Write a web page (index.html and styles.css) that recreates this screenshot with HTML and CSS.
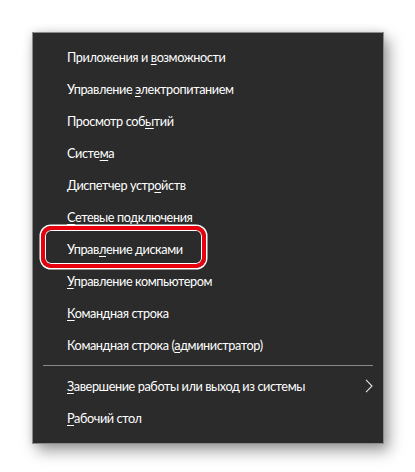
FILE: index.html
```html
<!DOCTYPE html>
<html lang="ru">
<head>
<meta charset="utf-8">
<link rel="stylesheet" href="styles.css">
</head>
<body>
<div class="menu">
  <div class="item"><span class="label">Приложения и <u>в</u>озможности</span></div>
  <div class="item"><span class="label">Управление <u>э</u>лектропитанием</span></div>
  <div class="item"><span class="label">Просмотр соб<u>ы</u>тий</span></div>
  <div class="item"><span class="label">Систе<u>м</u>а</span></div>
  <div class="item"><span class="label">Диспетчер устр<u>о</u>йств</span></div>
  <div class="item"><span class="label"><u>С</u>етевые подключения</span></div>
  <div class="item highlighted"><span class="label">Управ<u>л</u>ение дисками</span></div>
  <div class="item"><span class="label"><u>У</u>правление компьютером</span></div>
  <div class="item"><span class="label"><u>К</u>омандная строка</span></div>
  <div class="item"><span class="label">Командная строка (<u>а</u>дминистратор)</span></div>
  <div class="separator"></div>
  <div class="item submenu"><span class="label"><u>З</u>авершение работы или выход из системы</span>
    <svg class="chevron" width="8" height="14" viewBox="0 0 8 14"><path d="M1 0.8 L7 7 L1 13.2" fill="none" stroke="#e6e6e6" stroke-width="1.1"/></svg>
  </div>
  <div class="item"><span class="label"><u>Р</u>абочий стол</span></div>
</div>
</body>
</html>
```
FILE: styles.css
```css
html, body {
  margin: 0;
  padding: 0;
  background: #ffffff;
}
body {
  width: 415px;
  height: 472px;
  overflow: hidden;
  font-family: "Lato", "Noto Sans", sans-serif;
}
.menu {
  box-sizing: border-box;
  margin: 32px 0 0 32px;
  width: 352px;
  height: 412px;
  background: #2b2b2b;
  border: 1px solid #8c8c8c;
  padding: 8px 0 9px 0;
  box-shadow: 5px 7px 14px rgba(0, 0, 0, 0.38), 0 0 8px rgba(0, 0, 0, 0.12);
  display: flex;
  flex-direction: column;
}
.item {
  position: relative;
  height: 32px;
  display: flex;
  align-items: center;
  padding-left: 34px;
  color: #ffffff;
  font-size: 12.7px;
  letter-spacing: -0.4px;
  white-space: nowrap;
}
.label {
  padding-bottom: 1px;
}
.label u {
  text-decoration: underline;
  text-underline-offset: 2px;
  text-decoration-thickness: 1px;
}
.separator {
  height: 1px;
  background: #8a8a8a;
  margin: 4px 10px 4px 10px;
}
.submenu .chevron {
  position: absolute;
  right: 10px;
  top: 9px;
}
.highlighted::after {
  content: "";
  position: absolute;
  left: 8px;
  top: -7px;
  width: 165px;
  height: 42px;
  box-sizing: border-box;
  border: 4px solid #e8000f;
  border-radius: 10px;
  box-shadow: 0 0 0 1.5px #ffffff, inset 0 0 0 1px #ffffff;
}
```
